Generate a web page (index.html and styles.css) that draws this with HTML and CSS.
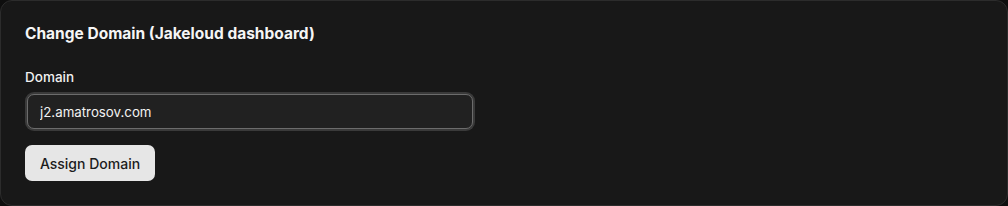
FILE: index.html
```html
<!DOCTYPE html>
<html>
<head>
<meta charset="utf-8">
<link rel="stylesheet" href="styles.css">
</head>
<body>
<section class="card">
  <h2 class="title">Change Domain (Jakeloud dashboard)</h2>
  <label class="label" for="domain">Domain</label>
  <input class="input" id="domain" type="text" value="j2.amatrosov.com">
  <button class="btn" type="button">Assign Domain</button>
</section>
</body>
</html>
```
FILE: styles.css
```css
html, body {
  margin: 0;
  padding: 0;
  background: #0e0e0e;
}
body {
  font-family: Inter, "Noto Sans", "Liberation Sans", sans-serif;
  color: #f2f2f2;
}
.card {
  box-sizing: border-box;
  width: 1008px;
  height: 206px;
  background: #181818;
  border: 1px solid #2c2c2c;
  border-radius: 12px;
  padding: 23px 24px 24px 24px;
  display: flex;
  flex-direction: column;
  align-items: flex-start;
}
.title {
  margin: 0;
  font-size: 15.5px;
  line-height: 20px;
  font-weight: 650;
  color: #f5f5f5;
}
.label {
  margin-top: 24px;
  font-size: 13.5px;
  line-height: 18px;
  font-weight: 550;
  color: #f0f0f0;
}
.input {
  box-sizing: border-box;
  margin: 8px 0 0 2px;
  width: 446px;
  height: 35px;
  padding: 0 12px;
  background: #212121;
  border: 1px solid #6c6c6c;
  border-radius: 7px;
  box-shadow: 0 0 0 2px #3a3a3a;
  color: #f2f2f2;
  font-family: inherit;
  font-size: 13.3px;
  outline: none;
}
.btn {
  margin-top: 16px;
  width: 130px;
  height: 36px;
  padding: 0;
  background: #e6e6e6;
  border: none;
  border-radius: 7px;
  color: #1c1c1c;
  font-family: inherit;
  font-size: 14px;
  font-weight: 450;
}
```
